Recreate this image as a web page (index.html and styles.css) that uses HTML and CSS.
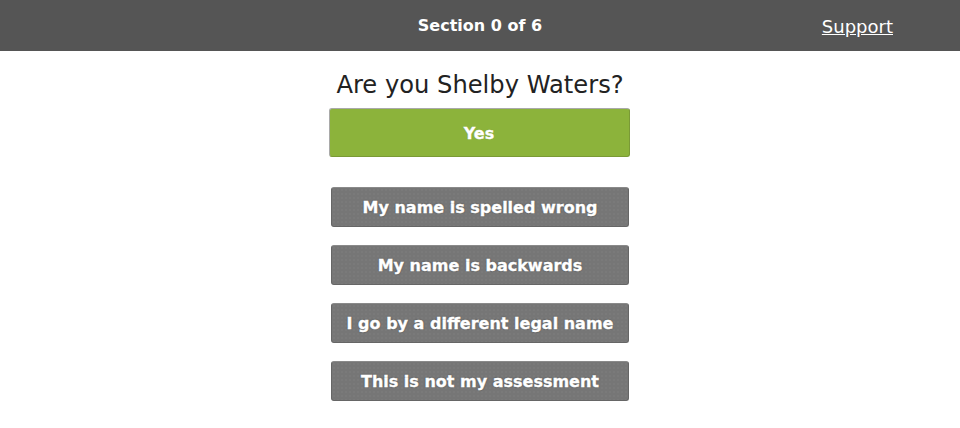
FILE: index.html
```html
<!DOCTYPE html>
<html lang="en">
<head>
<meta charset="utf-8">
<title>Confirm identity</title>
<link rel="stylesheet" href="styles.css">
</head>
<body>
<header class="topbar">
  <div class="topbar-title">Section 0 of 6</div>
  <a class="topbar-link" href="#">Support</a>
</header>
<main class="content">
  <h1 class="question">Are you Shelby Waters?</h1>
  <button class="btn btn-yes" type="button">Yes</button>
  <div class="alt-list">
    <button class="btn btn-alt" type="button">My name is spelled wrong</button>
    <button class="btn btn-alt" type="button">My name is backwards</button>
    <button class="btn btn-alt" type="button">I go by a different legal name</button>
    <button class="btn btn-alt" type="button">This is not my assessment</button>
  </div>
</main>
</body>
</html>
```

FILE: styles.css
```css
html, body {
  margin: 0;
  padding: 0;
  background: #ffffff;
  font-family: "DejaVu Sans", Verdana, sans-serif;
}

.topbar {
  height: 51px;
  background: #555555;
  display: grid;
  grid-template-columns: 1fr auto 1fr;
  align-items: center;
  color: #ffffff;
}

.topbar-title {
  grid-column: 2;
  font-size: 16px;
  font-weight: bold;
  line-height: 20px;
  padding-top: 1px;
}

.topbar-link {
  grid-column: 3;
  justify-self: end;
  margin-right: 67px;
  color: #ffffff;
  font-size: 18px;
  line-height: 22px;
  text-decoration: underline;
  padding-top: 3px;
}

.content {
  display: flex;
  flex-direction: column;
  align-items: center;
}

.question {
  margin: 20px 0 9px;
  font-size: 24.2px;
  font-weight: normal;
  line-height: 28px;
  color: #222222;
}

.btn {
  font-family: "DejaVu Sans", Verdana, sans-serif;
  font-weight: bold;
  font-size: 16px;
  color: #ffffff;
  border-radius: 3px;
  cursor: pointer;
  padding: 0;
  box-sizing: border-box;
  -webkit-text-stroke: 0.35px #ffffff;
}

.btn-yes {
  width: 301px;
  height: 49px;
  padding-top: 2px;
  background: #8cb33b;
  border: 1px solid #7a9a36;
  border-top-color: #a9a9a9;
  border-left-color: #a9a9a9;
  margin-left: -2px;
  text-shadow: 0 0 1px rgba(0, 0, 0, 0.25);
}

.alt-list {
  margin-top: 30px;
  display: flex;
  flex-direction: column;
  gap: 18px;
}

.btn-alt {
  width: 298px;
  height: 40px;
  background-color: #767676;
  background-image: radial-gradient(rgba(255, 255, 255, 0.07) 0.6px, transparent 0.8px);
  background-size: 4px 4px;
  border: 1px solid #666666;
  border-top-color: #8a8a8a;
  text-shadow: 0 0 2px rgba(0, 0, 0, 0.45);
}
```
